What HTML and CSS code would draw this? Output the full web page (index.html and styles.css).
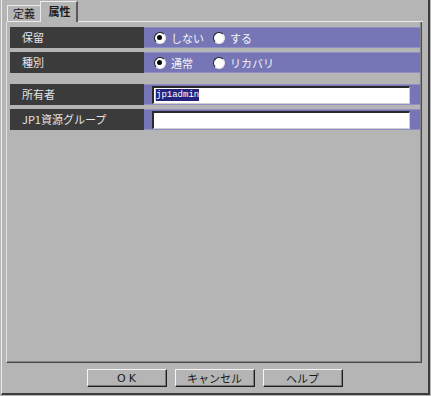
FILE: index.html
```html
<!DOCTYPE html>
<html lang="ja">
<head>
  <meta charset="UTF-8" />
  <title>属性</title>
  <link rel="stylesheet" href="styles.css">
</head>
<body>
  <div class="window">

    <!-- タブ -->
    <div class="tabs">
      <div class="tab">定義</div>
      <div class="tab active">属性</div>
      <div class="tab-rest"></div>
    </div>

    <div class="panel">
      <div class="group">
        <div class="row">
          <div class="label">保留</div>
          <div class="value">
            <label class="option"><span class="radio checked"></span>しない</label>
            <label class="option"><span class="radio"></span>する</label>
          </div>
        </div>
        <div class="row">
          <div class="label">種別</div>
          <div class="value">
            <label class="option"><span class="radio checked"></span>通常</label>
            <label class="option"><span class="radio"></span>リカバリ</label>
          </div>
        </div>
      </div>

      <div class="group">
        <div class="row">
          <div class="label">所有者</div>
          <div class="value">
            <div class="input"><span class="selected">jp1admin</span></div>
          </div>
        </div>
        <div class="row">
          <div class="label">JP1資源グループ</div>
          <div class="value">
            <div class="input"></div>
          </div>
        </div>
      </div>
    </div>

    <div class="buttons">
      <button class="btn ok">OK</button>
      <button class="btn">キャンセル</button>
      <button class="btn">ヘルプ</button>
    </div>

  </div>
</body>
</html>
```

FILE: styles.css
```css
    body {
      margin: 0;
      background: #b5b5b5;
      font-family: "Noto Sans CJK JP", "DejaVu Sans", sans-serif;
      font-size: 11px;
      color: #1a1a1a;
      overflow: hidden;
    }

    .window {
      box-sizing: border-box;
      margin-left: 1px;
      width: 429px;
      height: 395px;
      padding: 1px 5px 0 4px;
      border-left: 1px solid #ececec;
      border-right: 2px solid #3c3c3c;
      border-bottom: 2px solid #3c3c3c;
      display: flex;
      flex-direction: column;
    }

    /* タブ */
    .tabs {
      display: flex;
      align-items: flex-end;
      height: 21px;
    }

    .tab {
      box-sizing: border-box;
      margin-left: 1px;
      width: 33px;
      height: 17px;
      border-top: 1px solid #ececec;
      border-left: 1px solid #ececec;
      border-bottom: 1px solid #ececec;
      font-size: 11px;
      line-height: 15px;
      text-align: center;
    }

    .tab.active {
      margin-left: 0;
      width: 38px;
      height: 21px;
      border-bottom: none;
      border-right: 2px solid #5a5a5a;
      font-weight: bold;
      line-height: 18px;
      padding-left: 2px;
    }

    .tab-rest {
      flex: 1;
      border-bottom: 1px solid #ececec;
    }

    .panel {
      box-sizing: border-box;
      width: 416px;
      height: 341px;
      padding: 5px 1px 0 3px;
      border-left: 1px solid #e2e2e2;
      border-right: 1px solid #4a4a4a;
      border-bottom: 1px solid #4a4a4a;
      box-shadow: inset -1px -1px 0 #858585;
      display: flex;
      flex-direction: column;
      gap: 11px;
    }

    .group {
      display: flex;
      flex-direction: column;
      gap: 4px;
    }

    .row {
      display: flex;
      height: 21px;
    }

    .label {
      box-sizing: border-box;
      width: 134px;
      padding-left: 12px;
      background: #3b3b3b;
      color: #e6e6e6;
      line-height: 21px;
      font-size: 11px;
    }

    .value {
      box-sizing: border-box;
      flex: 1;
      display: flex;
      align-items: center;
      padding: 0 8px 0 10px;
      background: #7676b6;
      border-top: 1px solid #9090c4;
      border-bottom: 1px solid #9090c4;
      color: #f4f4f4;
    }

    .option {
      width: 60px;
      display: flex;
      align-items: center;
      white-space: nowrap;
    }

    .radio {
      box-sizing: border-box;
      position: relative;
      width: 12px;
      height: 12px;
      margin-right: 5px;
      border-radius: 50%;
      background: #fff;
      border: 1.5px solid;
      border-color: #1c1c1c #e8e8e8 #e8e8e8 #1c1c1c;
    }

    .radio.checked::after {
      content: "";
      position: absolute;
      top: 2px;
      left: 2px;
      width: 5px;
      height: 5px;
      border-radius: 50%;
      background: #000;
    }

    .value .option + .option .radio {
      margin-left: -1px;
    }

    .input {
      box-sizing: border-box;
      width: 100%;
      height: 18px;
      margin-left: -2px;
      background: #fff;
      border-top: 2px solid #2a2a2a;
      border-left: 2px solid #2a2a2a;
      border-right: 1px solid #cfcfcf;
      border-bottom: 1px solid #cfcfcf;
      padding-left: 1px;
      display: flex;
      align-items: center;
    }

    .selected {
      font-family: "Liberation Mono", monospace;
      font-size: 9px;
      line-height: 12px;
      background: #24247c;
      color: #fff;
      border-left: 1px solid #e8e050;
    }

    /* ボタン */
    .buttons {
      display: flex;
      justify-content: center;
      gap: 8px;
      margin-top: 6px;
    }

    .btn {
      box-sizing: border-box;
      width: 80px;
      height: 18px;
      padding: 0;
      background: #b5b5b5;
      border: 1px solid;
      border-color: #f4f4f4 #1e1e1e #1e1e1e #f4f4f4;
      box-shadow: inset -1px -1px 0 #7a7a7a;
      font-family: "Noto Sans CJK JP", sans-serif;
      font-size: 11px;
      line-height: 15px;
      color: #1a1a1a;
    }

    .btn.ok {
      font-family: "DejaVu Sans", sans-serif;
      letter-spacing: 3px;
      padding-left: 3px;
    }
```
